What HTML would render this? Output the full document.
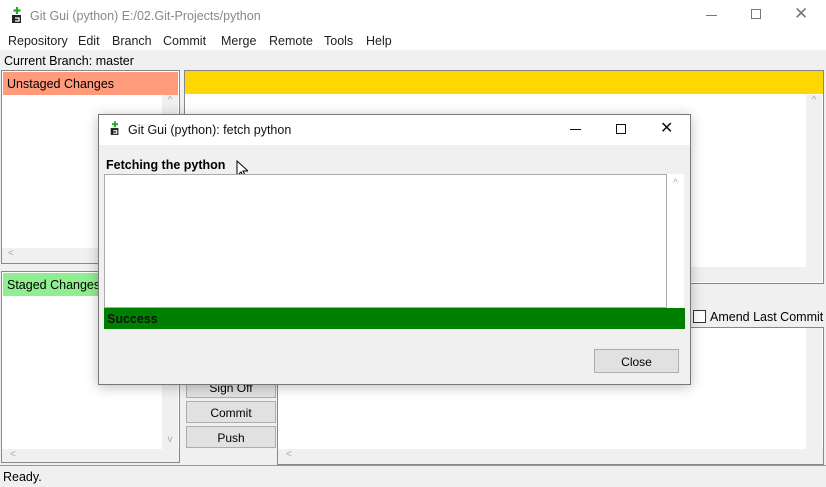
<!DOCTYPE html>
<html><head><meta charset="utf-8"><style>
*{margin:0;padding:0;box-sizing:border-box}
body{width:826px;height:487px;position:relative;overflow:hidden;background:#f0f0f0;font-family:"Liberation Sans","Noto Sans CJK KR",sans-serif;font-size:12px;color:#000}
.a{position:absolute}
.w{background:#fff}
.sb{background:#f0f0f0;color:#aaa;font-size:10px;text-align:center}
.btn{position:absolute;background:#e1e1e1;border:1px solid #adadad;text-align:center;font-size:12px}
.m{position:absolute;top:34px;font-size:12.5px;color:#222}
</style></head><body>
<div class="a w" style="left:0;top:0;width:826px;height:50px"></div>
<svg class="a" style="left:10px;top:7px" width="14" height="17" viewBox="0 0 14 17"><path d="M7 0v7M3.5 3.5h7" stroke="#2a2" stroke-width="2.2"/><path d="M2 8h9v8H2z" fill="#222"/><path d="M5 11h4v3H5" stroke="#fff" stroke-width="1.3" fill="none"/></svg>
<div class="a" style="left:30px;top:9px;font-size:12.5px;color:#888">Git Gui (python) E:/02.Git-Projects/python</div>
<div class="a" style="left:706px;top:15px;width:11px;height:1px;background:#777"></div>
<div class="a" style="left:751px;top:9px;width:10px;height:10px;border:1px solid #777"></div>
<div class="a" style="left:794px;top:4px;font-size:17px;color:#777">✕</div>
<div class="m" style="left:8px">Repository</div>
<div class="m" style="left:78px">Edit</div>
<div class="m" style="left:112px">Branch</div>
<div class="m" style="left:163px">Commit</div>
<div class="m" style="left:221px">Merge</div>
<div class="m" style="left:269px">Remote</div>
<div class="m" style="left:324px">Tools</div>
<div class="m" style="left:366px">Help</div>
<div class="a" style="left:4px;top:54px;font-size:12.5px">Current Branch: master</div>
<div class="a" style="left:1px;top:70px;width:179px;height:194px;border:1px solid #888;background:#fff"></div>
<div class="a" style="left:3px;top:72px;width:175px;height:23px;background:#ff9a7a;padding:5px 4px;font-size:12.5px">Unstaged Changes</div>
<div class="a sb" style="left:162px;top:95px;width:16px;height:153px">^</div>
<div class="a sb" style="left:2px;top:248px;width:177px;height:15px;text-align:left;padding-left:6px">&lt;</div>
<div class="a" style="left:1px;top:271px;width:179px;height:192px;border:1px solid #888;background:#fff"></div>
<div class="a" style="left:3px;top:273px;width:97px;height:23px;background:#90ee90;padding:5px 4px;font-size:12.5px;white-space:nowrap;overflow:hidden">Staged Changes</div>
<div class="a sb" style="left:162px;top:296px;width:16px;height:153px;padding-top:138px">v</div>
<div class="a sb" style="left:2px;top:449px;width:177px;height:13px;text-align:left;padding-left:8px">&lt;</div>
<div class="a" style="left:184px;top:70px;width:640px;height:214px;border:1px solid #888;background:#fff"></div>
<div class="a" style="left:185px;top:71px;width:638px;height:23px;background:#ffd700"></div>
<div class="a sb" style="left:806px;top:95px;width:16px;height:172px">^</div>
<div class="a sb" style="left:185px;top:267px;width:637px;height:15px"></div>
<div class="a" style="left:693px;top:310px;width:13px;height:13px;border:1px solid #333;background:#fff"></div>
<div class="a" style="left:710px;top:310px;font-size:12.5px">Amend Last Commit</div>
<div class="a" style="left:277px;top:327px;width:547px;height:138px;border:1px solid #888;background:#fff"></div>
<div class="a sb" style="left:806px;top:328px;width:16px;height:121px"></div>
<div class="a sb" style="left:278px;top:449px;width:545px;height:15px;text-align:left;padding-left:8px">&lt;</div>
<div class="btn" style="left:186px;top:376px;width:90px;height:22px;padding-top:4px">Sign Off</div>
<div class="btn" style="left:186px;top:401px;width:90px;height:22px;padding-top:4px">Commit</div>
<div class="btn" style="left:186px;top:426px;width:90px;height:22px;padding-top:4px">Push</div>
<div class="a" style="left:0;top:465px;width:826px;height:1px;background:#999"></div>
<div class="a" style="left:3px;top:470px;font-size:12.5px">Ready.</div>
<div class="a" style="left:98px;top:114px;width:593px;height:271px;border:1px solid #777;background:#f0f0f0;box-shadow:0 2px 12px rgba(0,0,0,.25)"></div>
<div class="a w" style="left:99px;top:115px;width:591px;height:30px"></div>
<svg class="a" style="left:109px;top:121px" width="12" height="15" viewBox="0 0 14 17"><path d="M7 0v7M3.5 3.5h7" stroke="#2a2" stroke-width="2.2"/><path d="M2 8h9v8H2z" fill="#222"/><path d="M5 11h4v3H5" stroke="#fff" stroke-width="1.3" fill="none"/></svg>
<div class="a" style="left:128px;top:123px;font-size:12.5px;color:#111">Git Gui (python): fetch python</div>
<div class="a" style="left:570px;top:129px;width:11px;height:1px;background:#111"></div>
<div class="a" style="left:616px;top:124px;width:10px;height:10px;border:1px solid #111"></div>
<div class="a" style="left:660px;top:118px;font-size:16px;color:#111">✕</div>
<div class="a" style="left:106px;top:158px;font-size:12.5px;font-weight:bold">Fetching the python</div>
<svg class="a" style="left:236px;top:160px" width="12" height="19" viewBox="0 0 12 19"><path d="M1 1v15l4-4 3 6 2-1-3-6h5z" fill="#fff" stroke="#000"/></svg>
<div class="a" style="left:104px;top:174px;width:563px;height:134px;border:1px solid #aaa;background:#fff"></div>
<div class="a sb" style="left:667px;top:174px;width:17px;height:134px;background:#fff;padding-top:4px">^</div>
<div class="a" style="left:104px;top:308px;width:581px;height:21px;background:#008000;padding:4px 3px;font-size:12.5px;font-weight:bold;color:#111">Success</div>
<div class="btn" style="left:594px;top:349px;width:85px;height:24px;padding-top:5px">Close</div>
</body></html>
